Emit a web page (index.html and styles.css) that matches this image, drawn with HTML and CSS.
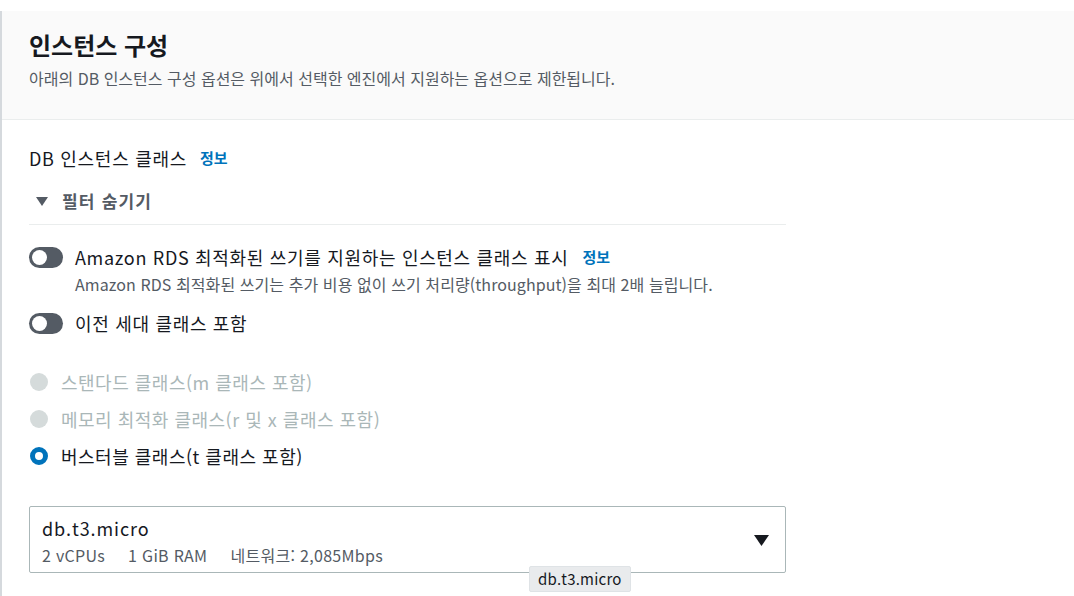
FILE: index.html
```html
<!DOCTYPE html>
<html lang="ko">
<head>
<meta charset="utf-8">
<link rel="stylesheet" href="styles.css">
</head>
<body>
<div class="panel">
  <div class="header">
    <h2 class="title">인스턴스 구성</h2>
    <p class="subtitle">아래의 DB 인스턴스 구성 옵션은 위에서 선택한 엔진에서 지원하는 옵션으로 제한됩니다.</p>
  </div>
  <div class="body">
    <div class="field-label">DB 인스턴스 클래스 <a class="info">정보</a></div>
    <div class="filter">
      <div class="filter-head">
        <svg class="caret" width="12" height="10" viewBox="0 0 12 10"><path d="M0 1h12L6 10z" fill="#545b64"/></svg>
        <span>필터 숨기기</span>
      </div>
    </div>
    <div class="toggle-row">
      <span class="toggle"><span class="knob"></span></span>
      <div class="toggle-text">
        <div class="toggle-label">Amazon RDS 최적화된 쓰기를 지원하는 인스턴스 클래스 표시 <a class="info">정보</a></div>
        <div class="toggle-desc">Amazon RDS 최적화된 쓰기는 추가 비용 없이 쓰기 처리량(throughput)을 최대 2배 늘립니다.</div>
      </div>
    </div>
    <div class="toggle-row second">
      <span class="toggle"><span class="knob"></span></span>
      <div class="toggle-text">
        <div class="toggle-label">이전 세대 클래스 포함</div>
      </div>
    </div>
    <div class="radios">
      <div class="radio disabled"><span class="dot"></span>스탠다드 클래스(m 클래스 포함)</div>
      <div class="radio disabled"><span class="dot"></span>메모리 최적화 클래스(r 및 x 클래스 포함)</div>
      <div class="radio checked"><span class="dot"></span>버스터블 클래스(t 클래스 포함)</div>
    </div>
    <div class="select">
      <div class="select-text">
        <div class="select-value">db.t3.micro</div>
        <div class="select-meta"><span>2 vCPUs</span><span>1 GiB RAM</span><span>네트워크: 2,085Mbps</span></div>
      </div>
      <svg class="select-caret" width="15" height="12" viewBox="0 0 15 12"><path d="M0 1h15L7.5 12z" fill="#16191f"/></svg>
      <div class="tooltip">db.t3.micro</div>
    </div>
  </div>
</div>
</body>
</html>
```
FILE: styles.css
```css
* { box-sizing: border-box; }
html, body { margin: 0; padding: 0; background: #fff; }
body {
  font-family: "Noto Sans CJK KR", "Noto Sans", sans-serif;
  color: #16191f;
  padding-top: 11px;
  overflow: hidden;
  height: 596px;
}
.panel {
  border-left: 2px solid #d5d9dd;
  min-height: 600px;
}
.header {
  background: #fafafa;
  border-bottom: 1px solid #eaeded;
  padding: 18px 27px 0;
  height: 109px;
}
.title {
  margin: 0;
  font-size: 24px;
  font-weight: 700;
  line-height: 32px;
}
.subtitle {
  margin: 5px 0 0;
  font-size: 16px;
  line-height: 24px;
  color: #545b64;
}
.body {
  padding: 25px 27px 0;
  width: 811px;
}
.field-label {
  font-size: 18px;
  line-height: 26px;
  display: flex;
  align-items: center;
  gap: 13px;
  letter-spacing: 0.7px;
}
.info {
  color: #0073bb;
  font-size: 15px;
  font-weight: 700;
  letter-spacing: 0;
}
.filter {
  margin-top: 17px;
  border-bottom: 1px solid #eaeded;
  padding-bottom: 10px;
}
.filter-head {
  display: flex;
  align-items: center;
  gap: 14px;
  padding-left: 7px;
  font-size: 17px;
  font-weight: 700;
  color: #545b64;
  line-height: 26px;
  letter-spacing: 1.2px;
}
.toggle-row {
  display: flex;
  align-items: flex-start;
  gap: 12px;
  margin-top: 19px;
}
.toggle-row.second { margin-top: 15px; }
.toggle {
  flex: none;
  width: 34px;
  height: 21px;
  border-radius: 11px;
  background: #545b64;
  display: flex;
  align-items: center;
  padding-left: 3px;
  margin-top: 3px;
}
.knob {
  width: 15px;
  height: 15px;
  border-radius: 50%;
  background: #fff;
}
.toggle-label {
  font-size: 18px;
  line-height: 26px;
  display: flex;
  align-items: center;
  gap: 14px;
  letter-spacing: 0.68px;
}
.toggle-desc {
  font-size: 16px;
  line-height: 22px;
  color: #545b64;
  margin-top: 3px;
  letter-spacing: 0.08px;
}
.radios {
  margin-top: 33px;
  display: flex;
  flex-direction: column;
  gap: 11px;
}
.radio {
  display: flex;
  align-items: center;
  gap: 13px;
  font-size: 18px;
  line-height: 26px;
  letter-spacing: 0.5px;
}
.dot {
  width: 18px;
  height: 18px;
  border-radius: 50%;
  margin-left: 1px;
  flex: none;
}
.radio.disabled { color: #aab7b8; }
.radio.disabled .dot { background: #d5dbdb; }
.radio.checked .dot { border: 5px solid #0073bb; background: #fff; }
.select {
  position: relative;
  margin-top: 37px;
  border: 1px solid #aab7b8;
  border-radius: 2px;
  height: 67px;
  display: flex;
  align-items: flex-start;
  padding: 9px 16px 0 12px;
}
.select-text { flex: 1; }
.select-value { font-size: 18px; line-height: 24px; letter-spacing: 0.9px; }
.select-meta {
  font-size: 16px;
  line-height: 22px;
  color: #545b64;
  display: flex;
  gap: 23px;
  margin-top: 4px;
  letter-spacing: 0.3px;
}
.select-caret { flex: none; align-self: center; margin-top: -9px; }
.tooltip {
  position: absolute;
  left: 499px;
  top: 59px;
  background: #e9ebed;
  border: 1px solid #dfe3e6;
  border-radius: 2px;
  padding: 2px 8px;
  font-size: 15px;
  line-height: 20px;
  color: #16191f;
  letter-spacing: 0.2px;
}
```
